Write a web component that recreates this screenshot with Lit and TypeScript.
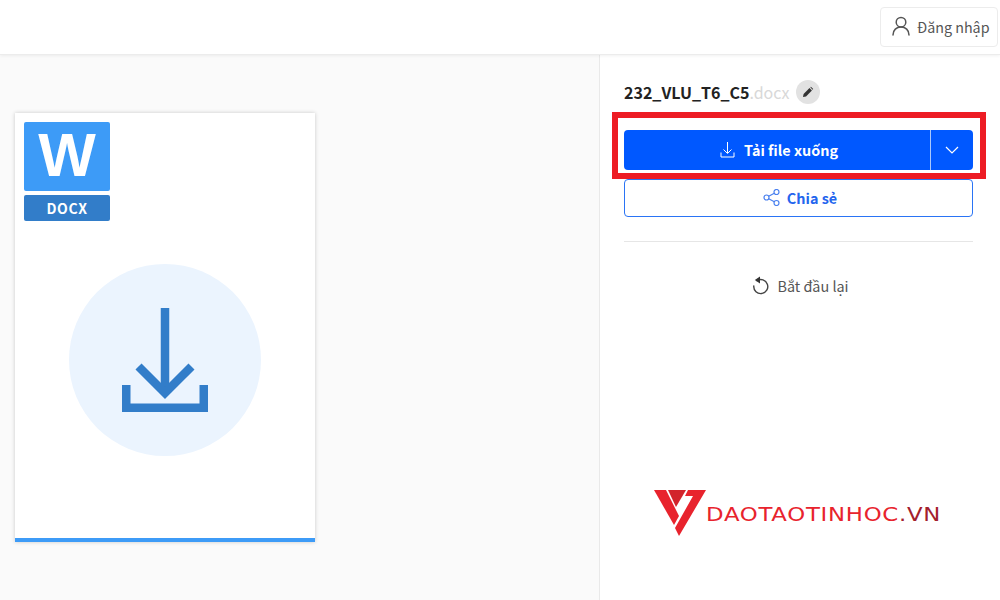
import { LitElement, html, css } from "lit";
import { customElement } from "lit/decorators.js";

@customElement("app-root")
export class AppRoot extends LitElement {
  static styles = css`
    :host { display: block; width: 1000px; height: 600px; overflow: hidden; position: relative; background: #fff;
      font-family: "Noto Sans CJK SC", "Noto Sans", sans-serif; }
    * { box-sizing: border-box; }
    svg { display: block; flex: none; }
    .header { height: 55px; background: #fff; display: flex; justify-content: flex-end; padding: 7px 2px 0 0;
      border-bottom: 1px solid #ececec; box-shadow: 0 1px 3px rgba(0,0,0,.06); position: relative; z-index: 1; }
    .login { width: 118px; height: 40px; border: 1px solid #ececec; border-radius: 4px; display: flex; align-items: center;
      padding: 0 0 2px 11px; gap: 7px; font-size: 14.3px; color: #555; }
    .main { display: flex; height: 545px; }
    .left { width: 600px; background: #fafafa; border-right: 1px solid #e9e9e9; padding: 58px 0 0 15px; }
    .page { width: 300px; height: 429px; background: #fff; box-shadow: 0 0 4px rgba(0,0,0,.2); display: flex; flex-direction: column;
      border-bottom: 4px solid #3d9bf7; padding: 9px 0 0 9px; }
    .w { width: 86px; height: 69px; background: #3d9bf7; border-radius: 2px; color: #fff; font: 700 61px/67px "Liberation Sans", sans-serif;
      text-align: center; }
    .ext { width: 86px; height: 26px; margin-top: 4px; background: #327dc9; border-radius: 2px; color: #fff; font-weight: 700; font-size: 14px;
      letter-spacing: .6px; display: flex; align-items: center; justify-content: center; padding-bottom: 1px; }
    .circle { width: 192px; height: 192px; border-radius: 50%; background: #ebf4fe; margin: 43px 0 0 45px; display: flex; align-items: center; justify-content: center; }
    .right { flex: 1; padding: 19px 27px 0 24px; display: flex; flex-direction: column; }
    .name { display: flex; align-items: center; height: 36px; font-size: 16px; font-weight: 700; color: #222; }
    .name span { color: #d8d8d8; font-weight: 400; }
    .edit { width: 24px; height: 24px; border-radius: 50%; background: #e2e2e2; margin-left: 6px; display: flex; align-items: center; justify-content: center; }
    .primary { margin-top: 20px; height: 40px; background: #0058ff; border-radius: 4px; display: flex; color: #fff; font-weight: 700; font-size: 14.4px; }
    .primary .main-btn { flex: 1; display: flex; align-items: center; justify-content: center; gap: 9px; border-right: 1px solid #a9c8fb; padding: 0 0 1px 4px; }
    .primary .arrow { width: 42px; display: flex; align-items: center; justify-content: center; }
    .share { margin-top: 9px; height: 38px; border: 1px solid #2a74f5; border-radius: 4px; display: flex; align-items: center; justify-content: center;
      gap: 7px; color: #2465ee; font-weight: 700; font-size: 14.4px; padding: 0 0 1px 3px; }
    hr { margin: 24px 0 0; border: 0; border-top: 1px solid #e6e6e6; width: 100%; }
    .restart { margin-top: 31px; display: flex; align-items: center; justify-content: center; gap: 8px; font-size: 14.4px; color: #555; height: 24px; padding-left: 4px; }
    .logo { margin: 191px 0 0 30px; display: flex; align-items: center; height: 50px; }
    .logo-text { font: 400 19px/1 "DejaVu Sans", sans-serif; color: #e8232d; letter-spacing: .6px; margin: 3px 0 0 0; white-space: nowrap;
      transform: scaleX(1.2); transform-origin: left center; }
    .logo-text b { font-weight: 400; color: #a3202c; }
    .highlight { position: absolute; left: 612px; top: 112px; width: 374px; height: 67px; border: 6px solid #ed1c24; pointer-events: none; }
  `;

  render() {
    return html`
      <div class="header">
        <div class="login">
          <svg width="18" height="20" viewBox="0 0 18 20" fill="none" stroke="#555" stroke-width="1.5">
            <circle cx="9" cy="6.2" r="4.8"></circle>
            <path d="M1 19c0-5 3.500-8 8-8s8 3 8 8" stroke-linecap="round"></path>
          </svg>
          Đăng nhập
        </div>
      </div>
      <div class="main">
        <div class="left">
          <div class="page">
            <div class="w">W</div>
            <div class="ext">DOCX</div>
            <div class="circle">
              <svg width="86" height="104" viewBox="0 0 86 104" fill="none" stroke="#327dc9" stroke-width="8.500">
                <path d="M43 0v84"></path>
                <path d="M16.500 58.500L43 85l26.500-26.500"></path>
                <path d="M4.250 77v22.750h77.500V77"></path>
              </svg>
            </div>
          </div>
        </div>
        <div class="right">
          <div class="name">232_VLU_T6_C5<span>.docx</span>
            <div class="edit">
              <svg width="12" height="12" viewBox="0 0 12 12" fill="#333"><path d="M1 11l.6-3L7.500 2.100l2.400 2.400L4 10.400z"></path><path d="M8.300 1.300l.6-.5 2.300 2.300-.6.600z"></path></svg>
            </div>
          </div>
          <div class="primary">
            <div class="main-btn">
              <svg width="15" height="17" viewBox="0 0 15 17" fill="none" stroke="#fff" stroke-width="1">
                <path d="M7.500 1v11M3.500 8.500l4 4 4-4M1 11.500v4.500h13v-4.500"></path>
              </svg>
              Tải file xuống
            </div>
            <div class="arrow">
              <svg width="14" height="8" viewBox="0 0 14 8" fill="none" stroke="#fff" stroke-width="1.2"><path d="M1 1l6 6 6-6"></path></svg>
            </div>
          </div>
          <div class="share">
            <svg width="17" height="17" viewBox="0 0 17 17" fill="none" stroke="#4a80ef" stroke-width="1.2">
              <circle cx="3.500" cy="8.500" r="2.500"></circle><circle cx="13.500" cy="3" r="2.500"></circle><circle cx="13.500" cy="14" r="2.500"></circle>
              <path d="M5.700 7.300l5.600-3.100M5.700 9.700l5.600 3.100"></path>
            </svg>
            Chia sẻ
          </div>
          <hr />
          <div class="restart">
            <svg width="17" height="19" viewBox="0 0 17 19" fill="none" stroke="#444" stroke-width="1.4">
              <path d="M5 4.700a7 7 0 1 1-3.200 5.300" stroke-linecap="round"></path>
              <path d="M8 0.500v7L2.800 4z" fill="#333" stroke="none"></path>
            </svg>
            Bắt đầu lại
          </div>
          <div class="logo">
            <svg width="52" height="48" viewBox="0 0 52 48">
              <path d="M0 1h12l13 26-5 9z" fill="#e8232d"></path>
              <path d="M14 1h18L22 18z" fill="#d2242c"></path>
              <path d="M34 1h18L25 47l-4-8 18-32h-8z" fill="#e8232d"></path>
            </svg>
            <div class="logo-text">DAOTAOTINHOC<b>.VN</b></div>
          </div>
        </div>
      </div>
      <div class="highlight"></div>
    `;
  }
}
